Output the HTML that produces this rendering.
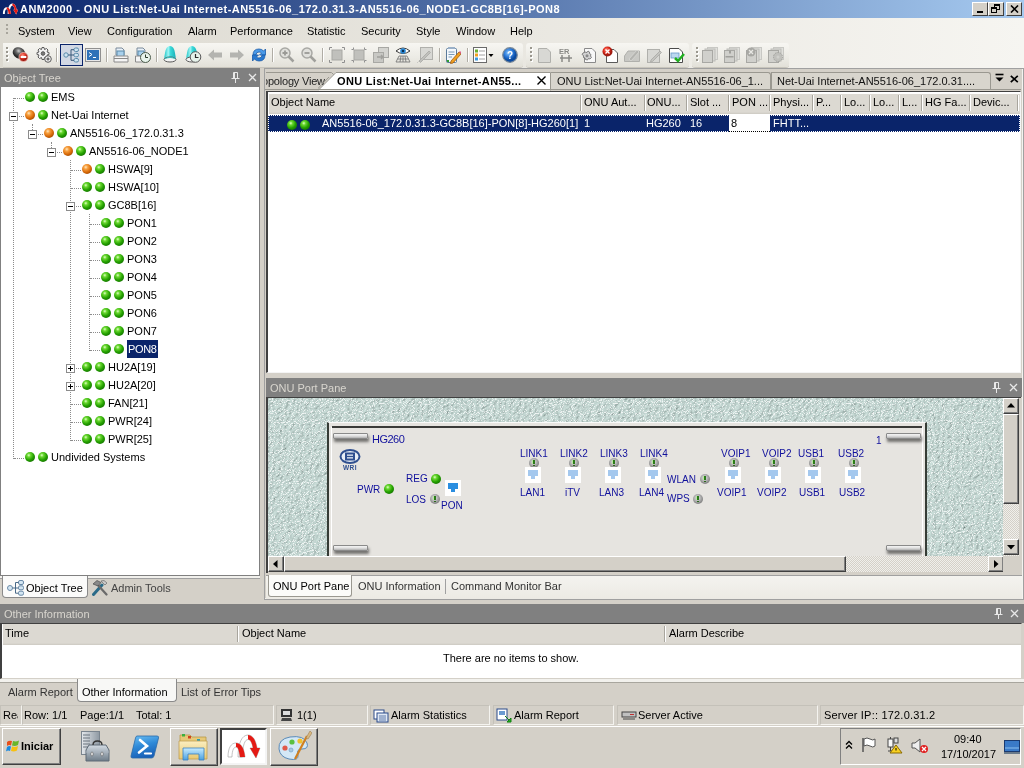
<!DOCTYPE html>
<html><head><meta charset="utf-8">
<style>
*{box-sizing:border-box;margin:0;padding:0}
html,body{width:1024px;height:768px;overflow:hidden;background:#d4d0c8;font-family:"Liberation Sans",sans-serif;font-size:11px;color:#000}
.a{position:absolute}
.t{position:absolute;white-space:nowrap;line-height:13px}
.hdr{position:absolute;background:#808080}
.hdr .t{color:#d8d5ce}
.g,.o,.gr{position:absolute;width:10px;height:10px;border-radius:50%}
.g{background:radial-gradient(circle at 38% 32%,#e0ffc8 0%,#6ad830 20%,#24a000 52%,#0e6000 92%)}
.o{background:radial-gradient(circle at 38% 32%,#ffe8c0 0%,#f7a040 22%,#d86a08 55%,#8a3c00 90%)}
.dv{position:absolute;width:1px;border-left:1px dotted #8c8c8c}
.dh{position:absolute;height:1px;border-top:1px dotted #8c8c8c}
.exp{position:absolute;width:9px;height:9px;border:1px solid #8c8c8c;background:#fff}
.exp:before{content:"";position:absolute;left:1px;top:3px;width:5px;height:1px;background:#000}
.exp.p:after{content:"";position:absolute;left:3px;top:1px;width:1px;height:5px;background:#000}
.pl{position:absolute;white-space:nowrap;line-height:12px;font-size:10px;color:#10109c}
.led{position:absolute;width:10px;height:10px;border-radius:50%;background:radial-gradient(circle at 45% 40%,#e8e8e8 0%,#a8a8a8 45%,#585858 100%)}
.led:before{content:"";position:absolute;left:4px;top:2px;width:2px;height:4px;background:#2a7a1a;box-shadow:-1px 0 0 #b8e8a0}
.led:after{content:"";position:absolute;left:4px;top:7px;width:2px;height:1px;background:#2a6a1a}
.port{position:absolute;width:16px;height:16px;background:#fff}
.port:before{content:"";position:absolute;left:3px;top:3px;width:10px;height:6px;background:#a4c8ee}
.port:after{content:"";position:absolute;left:6px;top:9px;width:4px;height:3px;background:#a4c8ee}
.sep{position:absolute;top:48px;width:1px;height:16px;background:#b8b5ad;border-right:1px solid #fff}
.colsep{position:absolute;top:95px;width:2px;height:17px;border-left:1px solid #a0a0a0;border-right:1px solid #fff}
</style></head><body><div style="position:absolute;left:0;top:0;width:1024px;height:768px;overflow:hidden;will-change:transform">

<!-- ============ TITLE BAR ============ -->
<div class="a" style="left:0;top:0;width:1024px;height:18px;background:linear-gradient(to right,#0a246a,#a6caf0)">
  <svg class="a" style="left:2px;top:2px" width="17" height="14" viewBox="0 0 36 27"><path d="M12 24 C12 10 16 2 22 2 C27 2 30 8 31 15 L34 15 L30 25 L24 15 L27 15 C26 9 24 6.5 22 6.5 C19 6.5 16.5 12 16.5 24Z" fill="#fff" /><path d="M22 2 C27 2 30 8 31 15 L34 15 L30 25 L24 15 L27 15 C26 9 24 6.5 22 6.5Z" fill="#e41a14"/><path d="M2 24 C2 15 5 10 10 10 C15 10 18 15 19 24 L14 24 C13 17 12 14 10 14 C8 14 6 17 6 24Z" fill="#fff" /><path d="M10 10 C15 10 18 15 19 24 L14 24 C13 17 12 14 10 14Z" fill="#e41a14"/></svg>
  <div class="t" style="left:20px;top:3px;color:#fff;font-weight:bold;letter-spacing:0.45px">ANM2000 - ONU List:Net-Uai Internet-AN5516-06_172.0.31.3-AN5516-06_NODE1-GC8B[16]-PON8</div>
  <div class="a" style="left:972px;top:2px;width:16px;height:14px;background:#d4d0c8;border:1px solid;border-color:#fff #404040 #404040 #fff"><div class="a" style="left:4px;top:8px;width:6px;height:2px;background:#000"></div></div>
  <div class="a" style="left:988px;top:2px;width:16px;height:14px;background:#d4d0c8;border:1px solid;border-color:#fff #404040 #404040 #fff"><div class="a" style="left:5px;top:1px;width:6px;height:6px;border:1px solid #000;border-top-width:2px"></div><div class="a" style="left:2px;top:4px;width:6px;height:6px;border:1px solid #000;border-top-width:2px;background:#d4d0c8"></div></div>
  <div class="a" style="left:1006px;top:2px;width:16px;height:14px;background:#d4d0c8;border:1px solid;border-color:#fff #404040 #404040 #fff"><svg class="a" style="left:3px;top:2px" width="9" height="8"><path d="M1 0.5 L8 7.5 M8 0.5 L1 7.5" stroke="#000" stroke-width="1.6"/></svg></div>
</div>

<!-- ============ MENU BAR ============ -->
<div class="a" style="left:0;top:18px;width:1024px;height:25px;background:linear-gradient(to right,#dcd9d0,#f6f5f1)">
  <div class="a" style="left:6px;top:6px;width:2px;height:12px;background:repeating-linear-gradient(to bottom,#a8a59c 0 2px,transparent 2px 4px)"></div>
  <div class="t" style="left:18px;top:7px">System</div>
  <div class="t" style="left:68px;top:7px">View</div>
  <div class="t" style="left:107px;top:7px">Configuration</div>
  <div class="t" style="left:188px;top:7px">Alarm</div>
  <div class="t" style="left:230px;top:7px">Performance</div>
  <div class="t" style="left:307px;top:7px">Statistic</div>
  <div class="t" style="left:361px;top:7px">Security</div>
  <div class="t" style="left:416px;top:7px">Style</div>
  <div class="t" style="left:456px;top:7px">Window</div>
  <div class="t" style="left:510px;top:7px">Help</div>
</div>

<!-- ============ TOOLBAR ROW ============ -->
<div class="a" style="left:0;top:43px;width:1024px;height:25px;background:linear-gradient(to right,#dcd9d0,#f6f5f1)"></div>
<div class="a" style="left:3px;top:43px;width:520px;height:24px;border-radius:0 3px 3px 0;background:linear-gradient(#f7f6f2,#ecebe5 60%,#e2e0d8);box-shadow:0 1px 0 #c8c5bc"></div>
<div class="a" style="left:526px;top:43px;width:163px;height:24px;border-radius:3px;background:linear-gradient(#f7f6f2,#ecebe5 60%,#e2e0d8);box-shadow:0 1px 0 #c8c5bc"></div>
<div class="a" style="left:692px;top:43px;width:97px;height:24px;border-radius:3px;background:linear-gradient(#f7f6f2,#ecebe5 60%,#e2e0d8);box-shadow:0 1px 0 #c8c5bc"></div>
<div class="a" style="left:6px;top:47px;width:2px;height:2px;background:#9a978e;box-shadow:1px 1px 0 #fff"></div><div class="a" style="left:6px;top:51px;width:2px;height:2px;background:#9a978e;box-shadow:1px 1px 0 #fff"></div><div class="a" style="left:6px;top:55px;width:2px;height:2px;background:#9a978e;box-shadow:1px 1px 0 #fff"></div><div class="a" style="left:6px;top:59px;width:2px;height:2px;background:#9a978e;box-shadow:1px 1px 0 #fff"></div>
<div class="a" style="left:530px;top:47px;width:2px;height:2px;background:#9a978e;box-shadow:1px 1px 0 #fff"></div><div class="a" style="left:530px;top:51px;width:2px;height:2px;background:#9a978e;box-shadow:1px 1px 0 #fff"></div><div class="a" style="left:530px;top:55px;width:2px;height:2px;background:#9a978e;box-shadow:1px 1px 0 #fff"></div><div class="a" style="left:530px;top:59px;width:2px;height:2px;background:#9a978e;box-shadow:1px 1px 0 #fff"></div>
<div class="a" style="left:696px;top:47px;width:2px;height:2px;background:#9a978e;box-shadow:1px 1px 0 #fff"></div><div class="a" style="left:696px;top:51px;width:2px;height:2px;background:#9a978e;box-shadow:1px 1px 0 #fff"></div><div class="a" style="left:696px;top:55px;width:2px;height:2px;background:#9a978e;box-shadow:1px 1px 0 #fff"></div><div class="a" style="left:696px;top:59px;width:2px;height:2px;background:#9a978e;box-shadow:1px 1px 0 #fff"></div>
<div class="a" style="left:56px;top:48px;width:1px;height:14px;background:#b0ada5;box-shadow:1px 0 0 #fff"></div>
<div class="a" style="left:106px;top:48px;width:1px;height:14px;background:#b0ada5;box-shadow:1px 0 0 #fff"></div>
<div class="a" style="left:156px;top:48px;width:1px;height:14px;background:#b0ada5;box-shadow:1px 0 0 #fff"></div>
<div class="a" style="left:272px;top:48px;width:1px;height:14px;background:#b0ada5;box-shadow:1px 0 0 #fff"></div>
<div class="a" style="left:322px;top:48px;width:1px;height:14px;background:#b0ada5;box-shadow:1px 0 0 #fff"></div>
<div class="a" style="left:439px;top:48px;width:1px;height:14px;background:#b0ada5;box-shadow:1px 0 0 #fff"></div>
<div class="a" style="left:467px;top:48px;width:1px;height:14px;background:#b0ada5;box-shadow:1px 0 0 #fff"></div>
<svg class="a" style="left:12px;top:46px" width="17" height="16" viewBox="0 0 17 16"><defs><radialGradient id="ds" cx="40%" cy="35%"><stop offset="0" stop-color="#d0d0d0"/><stop offset="0.45" stop-color="#6a6a6a"/><stop offset="1" stop-color="#2a2a2a"/></radialGradient><radialGradient id="rd" cx="40%" cy="35%"><stop offset="0" stop-color="#ff9a8a"/><stop offset="0.6" stop-color="#e03a2a"/><stop offset="1" stop-color="#a01a10"/></radialGradient></defs><ellipse cx="7" cy="7" rx="6.5" ry="5.5" transform="rotate(30 7 7)" fill="url(#ds)"/><circle cx="11.5" cy="11" r="4.5" fill="url(#rd)" stroke="#f4c0b8" stroke-width="0.8"/><rect x="8.7" y="10" width="5.6" height="2" fill="#fff"/></svg>
<svg class="a" style="left:36px;top:47px" width="16" height="16" viewBox="0 0 16 16"><g fill="#f2f2f2" stroke="#5a5a5a" stroke-width="1"><path d="M6 0.5 H8 L8.5 2.5 L10.5 1.5 L12 3 L11 5 L13 5.5 V7.5 L11 8 L12 10 L10.5 11.5 L8.5 10.5 L8 12.5 H6 L5.5 10.5 L3.5 11.5 L2 10 L3 8 L1 7.5 V5.5 L3 5 L2 3 L3.5 1.5 L5.5 2.5Z"/><circle cx="7" cy="6.5" r="1.8" fill="#7a7a7a"/><circle cx="12" cy="12" r="3.3"/><circle cx="12" cy="12" r="1.1" fill="#7a7a7a"/></g></svg>
<div class="a" style="left:60px;top:44px;width:23px;height:22px;background:#d2d8e4;border:1px solid #0a246a"></div>
<svg class="a" style="left:63px;top:47px" width="17" height="16" viewBox="0 0 17 16"><g fill="#cfe3f0" stroke="#5a8aaa" stroke-width="1"><circle cx="3" cy="8" r="2.2"/><rect x="11" y="1" width="4.5" height="3.5" rx="1.5"/><rect x="11" y="6.3" width="4.5" height="3.5" rx="1.5"/><rect x="11" y="11.5" width="4.5" height="3.5" rx="1.5"/></g><path d="M5.2 8 H8 M8 2.7 V13.3 M8 2.7 H11 M8 8 H11 M8 13.3 H11" stroke="#3a5a7a" fill="none"/></svg>
<svg class="a" style="left:85px;top:48px" width="16" height="14" viewBox="0 0 16 14"><rect x="0.5" y="0.5" width="15" height="13" fill="#e8e8e8" stroke="#909090"/><rect x="2" y="2" width="12" height="10" fill="#2f72b8"/><path d="M4 4.5 L7 6.5 L4 8.5" stroke="#fff" fill="none"/><path d="M8 9.5 H11" stroke="#fff"/></svg>
<svg class="a" style="left:113px;top:47px" width="16" height="16" viewBox="0 0 16 16"><path d="M3 1 H9 L11 3 V8 H3Z" fill="#e8f0f8" stroke="#7a8a9a"/><rect x="4" y="4" width="7" height="6" fill="#a8d0ec" stroke="#5a8aaa"/><path d="M1 9 H15 V15 H1Z" fill="#f4f4f4" stroke="#8a8a8a"/><path d="M1 11.5 H15" stroke="#8a8a8a"/></svg>
<svg class="a" style="left:135px;top:47px" width="16" height="16" viewBox="0 0 16 16"><path d="M2 1 H8 L10 3 V8 H2Z" fill="#e8f0f8" stroke="#7a8a9a"/><rect x="3" y="4" width="6" height="5" fill="#a8d0ec" stroke="#5a8aaa"/><path d="M0.5 9 H9 V15 H0.5Z" fill="#f4f4f4" stroke="#8a8a8a"/><circle cx="10.5" cy="10.5" r="5" fill="#e8f4ec" stroke="#4a5a4a"/><path d="M10.5 7.5 V10.5 H13" stroke="#2a3a2a" fill="none"/></svg>
<svg class="a" style="left:163px;top:45px" width="14" height="18" viewBox="0 0 14 18"><defs><linearGradient id="tl" x1="0" x2="1"><stop offset="0" stop-color="#22c8c8"/><stop offset="0.35" stop-color="#9ff4f4"/><stop offset="0.55" stop-color="#3ad8d8"/><stop offset="1" stop-color="#18b0b8"/></linearGradient></defs><path d="M1.5 15 Q1 12 2 8 Q3 1 7 1 Q11 1 12 8 Q13 12 12.5 15 Z" fill="url(#tl)"/><ellipse cx="7" cy="14.5" rx="6" ry="2.5" fill="#f4f4f4" stroke="#5a5a5a" stroke-width="1"/><path d="M2 13.5 Q7 11.5 12 13.5" stroke="#30c0c0" fill="none" stroke-width="1.2"/></svg>
<svg class="a" style="left:185px;top:45px" width="17" height="18" viewBox="0 0 17 18"><path d="M1.5 15 Q1 12 2 8 Q3 1 7 1 Q11 1 12 8 Q13 12 12.5 15 Z" fill="url(#tl)"/><ellipse cx="7" cy="14.5" rx="6" ry="2.5" fill="#f4f4f4" stroke="#5a5a5a" stroke-width="1"/><circle cx="10.5" cy="12" r="5.3" fill="#e6f2ea" stroke="#5a5a5a" stroke-width="1"/><path d="M10.5 9 V12.5 H13.5" stroke="#2a2a2a" fill="none" stroke-width="1.2"/></svg>
<svg class="a" style="left:208px;top:49px" width="15" height="12" viewBox="0 0 15 12"><path d="M0 6 L6 0.5 V3.5 H14 V8.5 H6 V11.5Z" fill="#b4b4b0"/></svg>
<svg class="a" style="left:229px;top:49px" width="15" height="12" viewBox="0 0 15 12"><path d="M15 6 L9 0.5 V3.5 H1 V8.5 H9 V11.5Z" fill="#b4b4b0"/></svg>
<svg class="a" style="left:251px;top:47px" width="16" height="16" viewBox="0 0 16 16"><path d="M2 8 Q2 2 8 2 Q11 2 12.5 4 L14.5 2 V8 H8.5 L10.5 6 Q9.5 5 8 5 Q5 5 5 8Z" fill="#4a9ae8" stroke="#1a5aa8" stroke-width="0.8"/><path d="M14 8 Q14 14 8 14 Q5 14 3.5 12 L1.5 14 V8 H7.5 L5.5 10 Q6.5 11 8 11 Q11 11 11 8Z" fill="#2a7ad0" stroke="#1a5aa8" stroke-width="0.8"/></svg>
<svg class="a" style="left:279px;top:47px" width="16" height="16" viewBox="0 0 16 16"><circle cx="6" cy="6" r="5" fill="#e0e0dc" stroke="#a8a8a4" stroke-width="1.5"/><path d="M9.5 9.5 L14.5 14.5" stroke="#a0a09c" stroke-width="2.5"/><path d="M3.5 6 H8.5 M6 3.5 V8.5" stroke="#9a9a96" stroke-width="1.8"/></svg>
<svg class="a" style="left:301px;top:47px" width="16" height="16" viewBox="0 0 16 16"><circle cx="6" cy="6" r="5" fill="#e0e0dc" stroke="#a8a8a4" stroke-width="1.5"/><path d="M9.5 9.5 L14.5 14.5" stroke="#a0a09c" stroke-width="2.5"/><path d="M3.5 6 H8.5" stroke="#9a9a96" stroke-width="1.8"/></svg>
<svg class="a" style="left:329px;top:47px" width="16" height="16" viewBox="0 0 16 16"><rect x="3" y="3" width="10" height="10" fill="#c0c0bc" stroke="#a8a8a4"/><path d="M0.5 3 V0.5 H3 M13 0.5 H15.5 V3 M15.5 13 V15.5 H13 M3 15.5 H0.5 V13" stroke="#909090" fill="none"/></svg>
<svg class="a" style="left:351px;top:47px" width="16" height="16" viewBox="0 0 16 16"><rect x="3" y="3" width="10" height="10" fill="#c0c0bc" stroke="#a8a8a4"/><path d="M0.5 2.5 H2.5 V0.5 M13.5 0.5 V2.5 H15.5 M15.5 13.5 H13.5 V15.5 M2.5 15.5 V13.5 H0.5" stroke="#909090" fill="none"/></svg>
<svg class="a" style="left:373px;top:47px" width="16" height="16" viewBox="0 0 16 16"><rect x="5.5" y="0.5" width="10" height="10" fill="#d4d4d0" stroke="#a8a8a4"/><rect x="0.5" y="5.5" width="10" height="10" fill="#c8c8c4" stroke="#a8a8a4"/><path d="M4 10 H10 L8 8 M10 10 L8 12" stroke="#a0a09c" stroke-width="1.5" fill="none"/></svg>
<svg class="a" style="left:395px;top:46px" width="16" height="17" viewBox="0 0 16 17"><path d="M1 5 Q8 -1 15 5 Q8 10 1 5Z" fill="#fff" stroke="#3a3a3a"/><circle cx="8" cy="5" r="2.8" fill="#2a8ad8"/><circle cx="8" cy="5" r="1.2" fill="#0a2a4a"/><path d="M4 10 H12 L15 16 H1Z M2.5 13 H13.5 M6 10 L5 16 M10 10 L11 16 M8 10 V16" stroke="#7a7a7a" fill="none" stroke-width="0.9"/></svg>
<svg class="a" style="left:417px;top:47px" width="16" height="16" viewBox="0 0 16 16"><rect x="3.5" y="0.5" width="12" height="12" fill="#d8d8d4" stroke="#b0b0ac"/><path d="M2 14 L12 4 L13.5 5.5 L3.5 15.5Z" fill="#c0c0bc" stroke="#a8a8a4" stroke-width="0.8"/><path d="M0.5 15.5 L2 14" stroke="#a8a8a4" stroke-width="1" stroke-dasharray="1 1"/></svg>
<svg class="a" style="left:445px;top:47px" width="16" height="17" viewBox="0 0 16 17"><rect x="1.5" y="1.5" width="10" height="14" rx="1" fill="#f4f8fc" stroke="#5a7a9a"/><path d="M3.5 5 H9.5 M3.5 7.5 H9.5 M3.5 10 H7" stroke="#7a9ab8"/><rect x="3" y="0" width="7" height="2" fill="#9ab0c8"/><path d="M6 14 L14 5 L16 7 L8 16 L5.5 16.5Z" fill="#f0a020" stroke="#a05a10" stroke-width="0.8"/><path d="M14 5 L16 7 L17 6 L15 4Z" fill="#e05a8a"/><rect x="2" y="13" width="2" height="2" fill="#30a030"/></svg>
<svg class="a" style="left:473px;top:47px" width="21" height="16" viewBox="0 0 21 16"><rect x="0.5" y="0.5" width="13" height="15" fill="#fff" stroke="#6a6a6a"/><rect x="2" y="2.5" width="3" height="3" fill="#6ab030"/><rect x="2" y="6.5" width="3" height="3" fill="#f0a020"/><rect x="2" y="10.5" width="3" height="3" fill="#3a9ae0"/><path d="M6 4 H12 M6 8 H12 M6 12 H12" stroke="#8a8a8a" stroke-width="0.8"/><path d="M15.5 7 H20.5 L18 10Z" fill="#000"/></svg>
<svg class="a" style="left:502px;top:47px" width="16" height="16" viewBox="0 0 16 16"><defs><radialGradient id="hb" cx="40%" cy="35%"><stop offset="0" stop-color="#8ac8ff"/><stop offset="0.6" stop-color="#2a78d8"/><stop offset="1" stop-color="#0a4aa0"/></radialGradient></defs><circle cx="8" cy="8" r="7.3" fill="url(#hb)" stroke="#7a8a9a" stroke-width="1.2"/><text x="8" y="12" font-size="10" font-weight="bold" fill="#fff" text-anchor="middle" font-family="Liberation Sans">?</text></svg>
<svg class="a" style="left:537px;top:47px" width="15" height="16" viewBox="0 0 15 16"><path d="M1.5 1.5 H10 L13.5 5 V15.5 H1.5Z" fill="#d8d8d4" stroke="#b0b0ac"/></svg>
<svg class="a" style="left:559px;top:47px" width="16" height="16" viewBox="0 0 16 16"><text x="0" y="7" font-size="7.5" font-weight="bold" fill="#8a8a86" font-family="Liberation Sans">ER</text><path d="M3 8 V15 M10 8 V15 M1 11 H13" stroke="#8a8a86" stroke-width="1.5"/></svg>
<svg class="a" style="left:580px;top:47px" width="17" height="16" viewBox="0 0 17 16"><path d="M4.5 1.5 H12 L15.5 5 V15.5 H4.5Z" fill="#f8f8f8" stroke="#8a8a8a"/><path d="M5 5 L7 5.5 L8 4 L9.5 5 L9.5 6.5 L11 7.5 L10.5 9 L11.5 10.5 L10 12 L8.5 11.5 L7.5 13 L5.5 12.5 L5 11 L3.5 10.5 L3.5 8.5 L2 7.5 L3 6 Z" fill="#d0d0d0" stroke="#6a6a6a" stroke-width="0.8"/><circle cx="7" cy="8.7" r="1.5" fill="#8a8a8a"/></svg>
<svg class="a" style="left:602px;top:46px" width="17" height="17" viewBox="0 0 17 17"><path d="M4.5 3.5 H12 L15.5 7 V16.5 H4.5Z" fill="#fff" stroke="#5a5a5a"/><defs><radialGradient id="rx" cx="40%" cy="35%"><stop offset="0" stop-color="#ff9a8a"/><stop offset="0.6" stop-color="#e02a1a"/><stop offset="1" stop-color="#a01a10"/></radialGradient></defs><circle cx="5.5" cy="5.5" r="5" fill="url(#rx)"/><path d="M3.5 3.5 L7.5 7.5 M7.5 3.5 L3.5 7.5" stroke="#fff" stroke-width="1.3"/></svg>
<svg class="a" style="left:624px;top:48px" width="16" height="14" viewBox="0 0 16 14"><path d="M0.5 8 L4 3 H15.5 V13.5 H0.5Z" fill="#c8c8c4" stroke="#b0b0ac"/><path d="M5 11 L13 2 L15 4 L7 13Z" fill="#b4b4b0" stroke="#d8d8d4" stroke-width="0.8"/></svg>
<svg class="a" style="left:646px;top:47px" width="16" height="16" viewBox="0 0 16 16"><rect x="1.5" y="2.5" width="12" height="13" fill="#d8d8d4" stroke="#b0b0ac"/><path d="M5 13 L14 4 L15.5 5.5 L6.5 14.5 L4.5 15Z" fill="#c4c4c0" stroke="#a8a8a4" stroke-width="0.8"/></svg>
<svg class="a" style="left:668px;top:47px" width="17" height="17" viewBox="0 0 17 17"><path d="M1.5 1.5 H11 L14.5 5 V15.5 H1.5Z" fill="#fff" stroke="#4a4a4a"/><rect x="3" y="6" width="8" height="5" fill="#bcd8f0" stroke="#6a9ac8" stroke-width="0.8"/><path d="M7 11 L10 14 L16 7" stroke="#20b020" stroke-width="2.5" fill="none"/></svg>
<svg class="a" style="left:702px;top:47px" width="16" height="16" viewBox="0 0 16 16"><rect x="5.5" y="0.5" width="10" height="12" fill="#e0e0dc" stroke="#c8c8c4"/><rect x="3" y="2" width="10" height="12" fill="#d8d8d4" stroke="#bcbcb8"/><rect x="0.5" y="3.5" width="10" height="12" fill="#d0d0cc" stroke="#a8a8a4"/></svg>
<svg class="a" style="left:724px;top:47px" width="16" height="16" viewBox="0 0 16 16"><rect x="5.5" y="0.5" width="10" height="12" fill="#e0e0dc" stroke="#c8c8c4"/><rect x="3" y="2" width="10" height="12" fill="#d8d8d4" stroke="#bcbcb8"/><rect x="0.5" y="3.5" width="10" height="12" fill="#d0d0cc" stroke="#a8a8a4"/><rect x="1.5" y="9" width="8" height="1.5" fill="#a0a09c"/><rect x="5" y="3.5" width="2" height="3" fill="#a0a09c"/></svg>
<svg class="a" style="left:746px;top:47px" width="16" height="16" viewBox="0 0 16 16"><rect x="5.5" y="0.5" width="10" height="12" fill="#e0e0dc" stroke="#c8c8c4"/><rect x="3" y="2" width="10" height="12" fill="#d8d8d4" stroke="#bcbcb8"/><rect x="0.5" y="3.5" width="10" height="12" fill="#d0d0cc" stroke="#a8a8a4"/><circle cx="5" cy="5" r="4.5" fill="#a8a8a4"/><path d="M3 3 L7 7 M7 3 L3 7" stroke="#e8e8e4" stroke-width="1.3"/></svg>
<svg class="a" style="left:768px;top:47px" width="16" height="16" viewBox="0 0 16 16"><rect x="5.5" y="0.5" width="10" height="12" fill="#e0e0dc" stroke="#c8c8c4"/><rect x="3" y="2" width="10" height="12" fill="#d8d8d4" stroke="#bcbcb8"/><rect x="0.5" y="3.5" width="10" height="12" fill="#d0d0cc" stroke="#a8a8a4"/><circle cx="10" cy="10" r="4.5" fill="#c0c0bc" stroke="#a0a09c" stroke-dasharray="1.5 1"/><circle cx="10" cy="10" r="1.5" fill="#d0d0cc"/></svg>

<!-- ============ LEFT PANEL ============ -->
<div class="hdr" style="left:0;top:68px;width:260px;height:19px">
  <div class="t" style="left:4px;top:4px">Object Tree</div>
  <svg class="a" style="left:231px;top:4px" width="9" height="11"><path d="M2.5 0.5 H6.5 V6 M2.5 0.5 V6 M0.5 6.5 H8.5 M4.5 7 V11" stroke="#e8e8e8" stroke-width="1" fill="none"/><path d="M3.5 1 V6" stroke="#e8e8e8"/></svg>
  <svg class="a" style="left:248px;top:5px" width="9" height="9"><path d="M1 1 L8 8 M8 1 L1 8" stroke="#e8e8e8" stroke-width="1.3"/></svg>
</div>
<div class="a" style="left:0;top:87px;width:260px;height:489px;background:#fff;border:1px solid #808080;border-top:0"></div>
<div class="dv" style="left:89px;top:214px;height:137px"></div>
<div class="dv" style="left:70px;top:160px;height:281px"></div>
<div class="dv" style="left:51px;top:142px;height:6px"></div>
<div class="dv" style="left:32px;top:124px;height:6px"></div>
<div class="dv" style="left:13px;top:98px;height:361px"></div>
<div class="dh" style="left:14px;top:98px;width:10px"></div>
<div class="g" style="left:25px;top:92px"></div>
<div class="g" style="left:38px;top:92px"></div>
<div class="t" style="left:51px;top:91px">EMS</div>
<div class="dh" style="left:14px;top:116px;width:10px"></div>
<div class="exp" style="left:9px;top:112px"></div>
<div class="o" style="left:25px;top:110px"></div>
<div class="g" style="left:38px;top:110px"></div>
<div class="t" style="left:51px;top:109px">Net-Uai Internet</div>
<div class="dh" style="left:33px;top:134px;width:10px"></div>
<div class="exp" style="left:28px;top:130px"></div>
<div class="o" style="left:44px;top:128px"></div>
<div class="g" style="left:57px;top:128px"></div>
<div class="t" style="left:70px;top:127px">AN5516-06_172.0.31.3</div>
<div class="dh" style="left:52px;top:152px;width:10px"></div>
<div class="exp" style="left:47px;top:148px"></div>
<div class="o" style="left:63px;top:146px"></div>
<div class="g" style="left:76px;top:146px"></div>
<div class="t" style="left:89px;top:145px">AN5516-06_NODE1</div>
<div class="dh" style="left:71px;top:170px;width:10px"></div>
<div class="o" style="left:82px;top:164px"></div>
<div class="g" style="left:95px;top:164px"></div>
<div class="t" style="left:108px;top:163px">HSWA[9]</div>
<div class="dh" style="left:71px;top:188px;width:10px"></div>
<div class="g" style="left:82px;top:182px"></div>
<div class="g" style="left:95px;top:182px"></div>
<div class="t" style="left:108px;top:181px">HSWA[10]</div>
<div class="dh" style="left:71px;top:206px;width:10px"></div>
<div class="exp" style="left:66px;top:202px"></div>
<div class="g" style="left:82px;top:200px"></div>
<div class="g" style="left:95px;top:200px"></div>
<div class="t" style="left:108px;top:199px">GC8B[16]</div>
<div class="dh" style="left:90px;top:224px;width:10px"></div>
<div class="g" style="left:101px;top:218px"></div>
<div class="g" style="left:114px;top:218px"></div>
<div class="t" style="left:127px;top:217px">PON1</div>
<div class="dh" style="left:90px;top:242px;width:10px"></div>
<div class="g" style="left:101px;top:236px"></div>
<div class="g" style="left:114px;top:236px"></div>
<div class="t" style="left:127px;top:235px">PON2</div>
<div class="dh" style="left:90px;top:260px;width:10px"></div>
<div class="g" style="left:101px;top:254px"></div>
<div class="g" style="left:114px;top:254px"></div>
<div class="t" style="left:127px;top:253px">PON3</div>
<div class="dh" style="left:90px;top:278px;width:10px"></div>
<div class="g" style="left:101px;top:272px"></div>
<div class="g" style="left:114px;top:272px"></div>
<div class="t" style="left:127px;top:271px">PON4</div>
<div class="dh" style="left:90px;top:296px;width:10px"></div>
<div class="g" style="left:101px;top:290px"></div>
<div class="g" style="left:114px;top:290px"></div>
<div class="t" style="left:127px;top:289px">PON5</div>
<div class="dh" style="left:90px;top:314px;width:10px"></div>
<div class="g" style="left:101px;top:308px"></div>
<div class="g" style="left:114px;top:308px"></div>
<div class="t" style="left:127px;top:307px">PON6</div>
<div class="dh" style="left:90px;top:332px;width:10px"></div>
<div class="g" style="left:101px;top:326px"></div>
<div class="g" style="left:114px;top:326px"></div>
<div class="t" style="left:127px;top:325px">PON7</div>
<div class="dh" style="left:90px;top:350px;width:10px"></div>
<div class="g" style="left:101px;top:344px"></div>
<div class="g" style="left:114px;top:344px"></div>
<div class="t" style="left:127px;top:340px;height:18px;line-height:18px;padding:0 1px;letter-spacing:-0.35px;background:#0a246a;color:#fff">PON8</div>
<div class="dh" style="left:71px;top:368px;width:10px"></div>
<div class="exp p" style="left:66px;top:364px"></div>
<div class="g" style="left:82px;top:362px"></div>
<div class="g" style="left:95px;top:362px"></div>
<div class="t" style="left:108px;top:361px">HU2A[19]</div>
<div class="dh" style="left:71px;top:386px;width:10px"></div>
<div class="exp p" style="left:66px;top:382px"></div>
<div class="g" style="left:82px;top:380px"></div>
<div class="g" style="left:95px;top:380px"></div>
<div class="t" style="left:108px;top:379px">HU2A[20]</div>
<div class="dh" style="left:71px;top:404px;width:10px"></div>
<div class="g" style="left:82px;top:398px"></div>
<div class="g" style="left:95px;top:398px"></div>
<div class="t" style="left:108px;top:397px">FAN[21]</div>
<div class="dh" style="left:71px;top:422px;width:10px"></div>
<div class="g" style="left:82px;top:416px"></div>
<div class="g" style="left:95px;top:416px"></div>
<div class="t" style="left:108px;top:415px">PWR[24]</div>
<div class="dh" style="left:71px;top:440px;width:10px"></div>
<div class="g" style="left:82px;top:434px"></div>
<div class="g" style="left:95px;top:434px"></div>
<div class="t" style="left:108px;top:433px">PWR[25]</div>
<div class="dh" style="left:14px;top:458px;width:10px"></div>
<div class="g" style="left:25px;top:452px"></div>
<div class="g" style="left:38px;top:452px"></div>
<div class="t" style="left:51px;top:451px">Undivided Systems</div>
<!-- left tabs -->
<div class="a" style="left:0;top:576px;width:260px;height:28px;background:#d4d0c8"></div>
<div class="a" style="left:0;top:576px;width:260px;height:2px;background:#f2f1ed"></div><div class="a" style="left:0;top:578px;width:260px;height:1px;background:#a0a0a0"></div>
<div class="a" style="left:2px;top:576px;width:86px;height:22px;background:#fbfbfa;border:1px solid #8a8a8a;border-top:0;border-radius:0 0 4px 4px"></div>
<svg class="a" style="left:7px;top:580px" width="17" height="16"><g fill="#d4e6f2" stroke="#6a8aa8"><circle cx="3" cy="8" r="2.5"/><rect x="11.5" y="0.5" width="5" height="4" rx="1.5"/><rect x="11.5" y="5.8" width="5" height="4" rx="1.5"/><rect x="11.5" y="11.2" width="5" height="4" rx="1.5"/></g><path d="M5.5 8 H8.5 M8.5 2.5 V13.2 M8.5 2.5 H11.5 M8.5 8 H11.5 M8.5 13.2 H11.5" stroke="#4a6a88" fill="none"/></svg>
<div class="t" style="left:26px;top:582px">Object Tree</div>
<svg class="a" style="left:92px;top:580px" width="16" height="16"><path d="M1.5 14.5 L10 5" stroke="#2a6a88" stroke-width="3" stroke-linecap="round"/><path d="M14.5 14.5 L5 4" stroke="#6a6a6a" stroke-width="2.2" stroke-linecap="round"/><path d="M1 4 L5 0.5 L9 2.5 L6 6Z" fill="#8a8a8a" stroke="#4a4a4a" stroke-width="0.7"/><path d="M9 1 L12 0.5 L15 3 L13 5Z" fill="#cacaca" stroke="#6a6a6a" stroke-width="0.7"/></svg>
<div class="t" style="left:111px;top:582px;color:#444">Admin Tools</div>

<!-- ============ RIGHT DOCUMENT AREA ============ -->
<div class="a" style="left:264px;top:68px;width:760px;height:532px;border:1px solid #a0a0a0;border-right-color:#a0a0a0;border-bottom-color:#a0a0a0"></div><div class="a" style="left:265px;top:69px;width:758px;height:530px;border:1px solid #f4f3ef;border-top:0;border-left:0"></div>
<div class="a" style="left:265px;top:69px;width:756px;height:21px;background:#d4d0c8"></div>
<svg class="a" style="left:266px;top:72px" width="72" height="18"><path d="M0 0.5 H65.5 L71 6" stroke="#9a9890" fill="none"/></svg>
<div class="a" style="left:266px;top:73px;width:62px;height:16px;overflow:hidden"><div class="t" style="left:-4px;top:2px;color:#222;letter-spacing:-0.2px">opology View</div></div>
<svg class="a" style="left:318px;top:72px" width="234" height="19"><path d="M0 18.5 L18 0.5 H232.5 V18.5" fill="#fff" stroke="#9a9890"/><path d="M-2 18.5 L11 5" stroke="#9a9890"/></svg>
<div class="t" style="left:337px;top:75px;font-weight:bold;letter-spacing:0.33px">ONU List:Net-Uai Internet-AN55...</div>
<svg class="a" style="left:537px;top:76px" width="9" height="9"><path d="M0.5 0.5 L8.5 8.5 M8.5 0.5 L0.5 8.5" stroke="#000" stroke-width="1.4"/></svg>
<div class="a" style="left:551px;top:72px;width:220px;height:18px;border:1px solid #9a9890;border-bottom:0;border-left:0;border-radius:0 3px 0 0;background:#d8d5cd"></div>
<div class="t" style="left:557px;top:75px;color:#111">ONU List:Net-Uai Internet-AN5516-06_1...</div>
<div class="a" style="left:771px;top:72px;width:220px;height:18px;border:1px solid #9a9890;border-bottom:0;border-radius:0 3px 0 0;background:#d8d5cd"></div>
<div class="t" style="left:777px;top:75px;color:#111">Net-Uai Internet-AN5516-06_172.0.31....</div>
<svg class="a" style="left:995px;top:73px" width="10" height="10"><path d="M0.5 1.5 H8.5" stroke="#000" stroke-width="1.6"/><path d="M0.5 4.5 H8.5 L4.5 8.5Z" fill="#000"/></svg>
<svg class="a" style="left:1010px;top:75px" width="9" height="8"><path d="M0.8 0.8 L7.8 7.2 M7.8 0.8 L0.8 7.2" stroke="#000" stroke-width="1.7"/></svg>
<div class="a" style="left:265px;top:89px;width:756px;height:1px;background:#9a9890"></div>
<div class="a" style="left:266px;top:91px;width:755px;height:282px;background:#fff;border:1px solid #404040;border-left-width:2px;border-right-color:#f4f4f4;border-bottom-color:#f4f4f4"></div>
<div class="a" style="left:268px;top:93px;width:752px;height:21px;background:linear-gradient(#dcd9d2 0,#dcd9d2 18px,#c4c1b9 21px);border-left:1px solid #fff;border-top:1px solid #fff"></div>
<div class="t" style="left:271px;top:96px">Object Name</div>
<div class="t" style="left:584px;top:96px">ONU Aut...</div>
<div class="t" style="left:647px;top:96px">ONU...</div>
<div class="t" style="left:690px;top:96px">Slot ...</div>
<div class="t" style="left:732px;top:96px">PON ...</div>
<div class="t" style="left:773px;top:96px">Physi...</div>
<div class="t" style="left:816px;top:96px">P...</div>
<div class="t" style="left:844px;top:96px">Lo...</div>
<div class="t" style="left:873px;top:96px">Lo...</div>
<div class="t" style="left:902px;top:96px">L...</div>
<div class="t" style="left:925px;top:96px">HG Fa...</div>
<div class="t" style="left:973px;top:96px">Devic...</div>
<div class="a" style="left:580px;top:95px;width:1px;height:16px;background:#a8a59d"></div><div class="a" style="left:581px;top:95px;width:1px;height:16px;background:#fff"></div>
<div class="a" style="left:644px;top:95px;width:1px;height:16px;background:#a8a59d"></div><div class="a" style="left:645px;top:95px;width:1px;height:16px;background:#fff"></div>
<div class="a" style="left:686px;top:95px;width:1px;height:16px;background:#a8a59d"></div><div class="a" style="left:687px;top:95px;width:1px;height:16px;background:#fff"></div>
<div class="a" style="left:728px;top:95px;width:1px;height:16px;background:#a8a59d"></div><div class="a" style="left:729px;top:95px;width:1px;height:16px;background:#fff"></div>
<div class="a" style="left:769px;top:95px;width:1px;height:16px;background:#a8a59d"></div><div class="a" style="left:770px;top:95px;width:1px;height:16px;background:#fff"></div>
<div class="a" style="left:812px;top:95px;width:1px;height:16px;background:#a8a59d"></div><div class="a" style="left:813px;top:95px;width:1px;height:16px;background:#fff"></div>
<div class="a" style="left:840px;top:95px;width:1px;height:16px;background:#a8a59d"></div><div class="a" style="left:841px;top:95px;width:1px;height:16px;background:#fff"></div>
<div class="a" style="left:869px;top:95px;width:1px;height:16px;background:#a8a59d"></div><div class="a" style="left:870px;top:95px;width:1px;height:16px;background:#fff"></div>
<div class="a" style="left:898px;top:95px;width:1px;height:16px;background:#a8a59d"></div><div class="a" style="left:899px;top:95px;width:1px;height:16px;background:#fff"></div>
<div class="a" style="left:921px;top:95px;width:1px;height:16px;background:#a8a59d"></div><div class="a" style="left:922px;top:95px;width:1px;height:16px;background:#fff"></div>
<div class="a" style="left:969px;top:95px;width:1px;height:16px;background:#a8a59d"></div><div class="a" style="left:970px;top:95px;width:1px;height:16px;background:#fff"></div>
<div class="a" style="left:1017px;top:95px;width:1px;height:16px;background:#a8a59d"></div><div class="a" style="left:1018px;top:95px;width:1px;height:16px;background:#fff"></div>
<div class="a" style="left:268px;top:115px;width:752px;height:17px;background:#0a246a;outline:1px dotted #fff;outline-offset:-1px"></div>
<div class="g" style="left:287px;top:120px"></div><div class="g" style="left:300px;top:120px"></div>
<div class="t" style="left:322px;top:117px;color:#fff">AN5516-06_172.0.31.3-GC8B[16]-PON[8]-HG260[1]</div>
<div class="t" style="left:584px;top:117px;color:#fff">1</div>
<div class="t" style="left:646px;top:117px;color:#fff">HG260</div>
<div class="t" style="left:690px;top:117px;color:#fff">16</div>
<div class="a" style="left:729px;top:115px;width:41px;height:17px;background:#fff;border-bottom:1px dotted #000"></div>
<div class="t" style="left:731px;top:117px">8</div>
<div class="t" style="left:773px;top:117px;color:#fff">FHTT...</div>

<!-- ============ ONU PORT PANE ============ -->
<div class="hdr" style="left:266px;top:378px;width:756px;height:19px">
  <div class="t" style="left:4px;top:4px">ONU Port Pane</div>
  <svg class="a" style="left:726px;top:4px" width="9" height="11"><path d="M2.5 0.5 H6.5 V6 M2.5 0.5 V6 M0.5 6.5 H8.5 M4.5 7 V11" stroke="#e8e8e8" stroke-width="1" fill="none"/><path d="M3.5 1 V6" stroke="#e8e8e8"/></svg>
  <svg class="a" style="left:743px;top:5px" width="9" height="9"><path d="M1 1 L8 8 M8 1 L1 8" stroke="#e8e8e8" stroke-width="1.3"/></svg>
</div>
<div class="a" style="left:266px;top:397px;width:755px;height:176px;background:#d4d0c8;border-left:2px solid #404040;border-top:1px solid #404040"></div>
<svg class="a" style="left:268px;top:398px" width="735" height="158"><defs><filter id="tx" x="0" y="0" width="100%" height="100%"><feTurbulence type="fractalNoise" baseFrequency="0.28 0.75" numOctaves="3" seed="11" result="n"/><feDiffuseLighting in="n" lighting-color="#f8fffd" surfaceScale="2.6" result="l"><feDistantLight azimuth="235" elevation="58"/></feDiffuseLighting></filter><filter id="dt" x="0" y="0" width="100%" height="100%"><feTurbulence type="fractalNoise" baseFrequency="1.1" numOctaves="1" seed="5"/><feColorMatrix type="matrix" values="0 0 0 0 1  0 0 0 0 1  0 0 0 0 1  8 0 0 0 -4.3"/></filter></defs><rect width="735" height="158" fill="#8cb2aa"/><g transform="rotate(-30 367 79)" opacity="0.6"><rect x="-200" y="-350" width="1135" height="858" filter="url(#tx)"/></g><rect width="735" height="158" filter="url(#dt)" opacity="0.75"/></svg>
<div class="a" style="left:327px;top:422px;width:600px;height:134px;background:#e6e4e0;border-left:2px solid #363c36;border-right:2px solid #363c36;border-top:1px solid #fafafa"></div>
<div class="a" style="left:332px;top:426px;width:590px;height:2px;background:#3a3a38"></div>
<div class="a" style="left:331px;top:427px;width:1px;height:129px;background:#fff"></div>
<div class="a" style="left:922px;top:427px;width:1px;height:129px;background:#fff"></div>
<div class="a" style="left:333px;top:433px;width:35px;height:6px;border-radius:1px;background:linear-gradient(#f4f4f4,#e0e0e0 50%,#b0b0b0);border:1px solid #8a8a8a;box-shadow:1px 3px 3px rgba(0,0,0,0.5)"></div>
<div class="a" style="left:333px;top:545px;width:35px;height:6px;border-radius:1px;background:linear-gradient(#f4f4f4,#e0e0e0 50%,#b0b0b0);border:1px solid #8a8a8a;box-shadow:1px 3px 3px rgba(0,0,0,0.5)"></div>
<div class="a" style="left:886px;top:433px;width:35px;height:6px;border-radius:1px;background:linear-gradient(#f4f4f4,#e0e0e0 50%,#b0b0b0);border:1px solid #8a8a8a;box-shadow:1px 3px 3px rgba(0,0,0,0.5)"></div>
<div class="a" style="left:886px;top:545px;width:35px;height:6px;border-radius:1px;background:linear-gradient(#f4f4f4,#e0e0e0 50%,#b0b0b0);border:1px solid #8a8a8a;box-shadow:1px 3px 3px rgba(0,0,0,0.5)"></div>
<div class="pl" style="left:372px;top:433px;font-size:11px;letter-spacing:-0.5px">HG260</div>
<div class="pl" style="left:876px;top:435px">1</div>
<svg class="a" style="left:339px;top:449px" width="22" height="22"><ellipse cx="11" cy="7.5" rx="9.5" ry="6.5" fill="#e8eef6" stroke="#2f4f8f" stroke-width="2"/><rect x="6" y="3.5" width="10" height="8" fill="#2f4f8f"/><rect x="8" y="5.5" width="6" height="1.3" fill="#e8eef6"/><rect x="8" y="8.2" width="6" height="1.3" fill="#e8eef6"/><text x="11" y="21" font-size="6.5" font-weight="bold" fill="#2f4f8f" text-anchor="middle" font-family="Liberation Sans" letter-spacing="0.5">WRI</text></svg>
<div class="pl" style="left:357px;top:484px">PWR</div>
<div class="g" style="left:384px;top:484px"></div>
<div class="pl" style="left:406px;top:473px">REG</div>
<div class="g" style="left:431px;top:474px"></div>
<div class="pl" style="left:406px;top:494px">LOS</div>
<div class="led" style="left:430px;top:494px"></div>
<div class="port pon" style="left:445px;top:480px"></div>
<style>.port.pon:before{background:#2a8ee0;left:3px;top:3px;width:10px;height:6px}.port.pon:after{background:#2a8ee0}</style>
<div class="pl" style="left:441px;top:500px">PON</div>
<div class="pl" style="left:520px;top:448px">LINK1</div>
<div class="led" style="left:529px;top:458px"></div>
<div class="port" style="left:525px;top:467px"></div>
<div class="pl" style="left:520px;top:487px">LAN1</div>
<div class="pl" style="left:560px;top:448px">LINK2</div>
<div class="led" style="left:569px;top:458px"></div>
<div class="port" style="left:565px;top:467px"></div>
<div class="pl" style="left:565px;top:487px">iTV</div>
<div class="pl" style="left:600px;top:448px">LINK3</div>
<div class="led" style="left:609px;top:458px"></div>
<div class="port" style="left:605px;top:467px"></div>
<div class="pl" style="left:599px;top:487px">LAN3</div>
<div class="pl" style="left:640px;top:448px">LINK4</div>
<div class="led" style="left:649px;top:458px"></div>
<div class="port" style="left:645px;top:467px"></div>
<div class="pl" style="left:639px;top:487px">LAN4</div>
<div class="pl" style="left:721px;top:448px">VOIP1</div>
<div class="led" style="left:729px;top:458px"></div>
<div class="port" style="left:725px;top:467px"></div>
<div class="pl" style="left:717px;top:487px">VOIP1</div>
<div class="pl" style="left:762px;top:448px">VOIP2</div>
<div class="led" style="left:769px;top:458px"></div>
<div class="port" style="left:765px;top:467px"></div>
<div class="pl" style="left:757px;top:487px">VOIP2</div>
<div class="pl" style="left:798px;top:448px">USB1</div>
<div class="led" style="left:809px;top:458px"></div>
<div class="port" style="left:805px;top:467px"></div>
<div class="pl" style="left:799px;top:487px">USB1</div>
<div class="pl" style="left:838px;top:448px">USB2</div>
<div class="led" style="left:849px;top:458px"></div>
<div class="port" style="left:845px;top:467px"></div>
<div class="pl" style="left:839px;top:487px">USB2</div>
<div class="pl" style="left:667px;top:474px">WLAN</div>
<div class="led" style="left:700px;top:474px"></div>
<div class="pl" style="left:667px;top:493px">WPS</div>
<div class="led" style="left:693px;top:494px"></div>
<div class="a" style="left:1003px;top:398px;width:16px;height:158px;background-color:#f0efeb;background-image:linear-gradient(45deg,#d4d0c8 25%,transparent 25%,transparent 75%,#d4d0c8 75%),linear-gradient(45deg,#d4d0c8 25%,transparent 25%,transparent 75%,#d4d0c8 75%);background-size:2px 2px;background-position:0 0,1px 1px"></div>
<div class="a" style="left:268px;top:556px;width:735px;height:16px;background-color:#f0efeb;background-image:linear-gradient(45deg,#d4d0c8 25%,transparent 25%,transparent 75%,#d4d0c8 75%),linear-gradient(45deg,#d4d0c8 25%,transparent 25%,transparent 75%,#d4d0c8 75%);background-size:2px 2px;background-position:0 0,1px 1px"></div>
<div class="a" style="left:1003px;top:398px;width:16px;height:16px;background:#d4d0c8;border:1px solid;border-color:#fff #404040 #404040 #fff;box-shadow:inset -1px -1px 0 #808080"><svg class="a" style="left:3px;top:4px" width="8" height="5"><path d="M4 0 L8 4.5 H0Z" fill="#000"/></svg></div>
<div class="a" style="left:1003px;top:414px;width:16px;height:90px;background:#d4d0c8;border:1px solid;border-color:#fff #404040 #404040 #fff;box-shadow:inset -1px -1px 0 #808080"></div>
<div class="a" style="left:1003px;top:539px;width:16px;height:16px;background:#d4d0c8;border:1px solid;border-color:#fff #404040 #404040 #fff;box-shadow:inset -1px -1px 0 #808080"><svg class="a" style="left:3px;top:5px" width="8" height="5"><path d="M0 0 H8 L4 4.5Z" fill="#000"/></svg></div>
<div class="a" style="left:268px;top:556px;width:16px;height:16px;background:#d4d0c8;border:1px solid;border-color:#fff #404040 #404040 #fff;box-shadow:inset -1px -1px 0 #808080"><svg class="a" style="left:4px;top:3px" width="5" height="8"><path d="M4.5 0 V8 L0 4Z" fill="#000"/></svg></div>
<div class="a" style="left:284px;top:556px;width:562px;height:16px;background:#d4d0c8;border:1px solid;border-color:#fff #404040 #404040 #fff;box-shadow:inset -1px -1px 0 #808080"></div>
<div class="a" style="left:988px;top:556px;width:16px;height:16px;background:#d4d0c8;border:1px solid;border-color:#fff #404040 #404040 #fff;box-shadow:inset -1px -1px 0 #808080"><svg class="a" style="left:5px;top:3px" width="5" height="8"><path d="M0 0 V8 L4.5 4Z" fill="#000"/></svg></div>
<div class="a" style="left:1003px;top:556px;width:16px;height:16px;background:#d4d0c8"></div>
<div class="a" style="left:266px;top:573px;width:756px;height:26px;background:#d4d0c8"></div>
<div class="a" style="left:266px;top:575px;width:756px;height:24px;background:linear-gradient(#f4f3ef,#eceae4);border-top:1px solid #a0a0a0"></div>
<div class="a" style="left:268px;top:575px;width:84px;height:22px;background:#fbfbf9;border:1px solid #9a9890;border-top:0;border-radius:0 0 3px 3px"></div>
<div class="t" style="left:273px;top:580px">ONU Port Pane</div>
<div class="t" style="left:358px;top:580px;color:#333">ONU Information</div>
<div class="a" style="left:445px;top:579px;width:1px;height:15px;background:#a0a0a0"></div>
<div class="t" style="left:451px;top:580px;color:#333">Command Monitor Bar</div>

<!-- ============ OTHER INFORMATION ============ -->
<div class="hdr" style="left:0;top:604px;width:1024px;height:19px">
  <div class="t" style="left:4px;top:4px">Other Information</div>
  <svg class="a" style="left:994px;top:4px" width="9" height="11"><path d="M2.5 0.5 H6.5 V6 M2.5 0.5 V6 M0.5 6.5 H8.5 M4.5 7 V11" stroke="#e8e8e8" stroke-width="1" fill="none"/><path d="M3.5 1 V6" stroke="#e8e8e8"/></svg>
  <svg class="a" style="left:1010px;top:5px" width="9" height="9"><path d="M1 1 L8 8 M8 1 L1 8" stroke="#e8e8e8" stroke-width="1.3"/></svg>
</div>
<div class="a" style="left:0;top:623px;width:1022px;height:56px;background:#fff;border:1px solid #404040;border-left-width:2px;border-right-color:#d4d0c8;border-bottom-color:#d4d0c8"></div>
<div class="a" style="left:2px;top:624px;width:1019px;height:21px;background:linear-gradient(#dcd9d2 0,#dcd9d2 19px,#c4c1b9 22px);border-left:1px solid #fff"></div>
<div class="t" style="left:5px;top:627px">Time</div>
<div class="t" style="left:242px;top:627px">Object Name</div>
<div class="t" style="left:669px;top:627px">Alarm Describe</div>
<div class="a" style="left:237px;top:626px;width:1px;height:16px;background:#a8a59d"></div><div class="a" style="left:238px;top:626px;width:1px;height:16px;background:#fff"></div>
<div class="a" style="left:664px;top:626px;width:1px;height:16px;background:#a8a59d"></div><div class="a" style="left:665px;top:626px;width:1px;height:16px;background:#fff"></div>
<div class="t" style="left:443px;top:652px">There are no items to show.</div>
<div class="a" style="left:0;top:679px;width:1024px;height:25px;background:#d4d0c8"></div>
<div class="a" style="left:0;top:679px;width:1024px;height:3px;background:#f2f1ed"></div><div class="a" style="left:0;top:682px;width:1024px;height:1px;background:#a8a69e"></div>
<div class="a" style="left:77px;top:679px;width:100px;height:23px;background:#f8f8f6;border:1px solid #8a8a8a;border-top:0;border-radius:0 0 4px 4px"></div>
<div class="t" style="left:8px;top:686px;color:#333">Alarm Report</div>
<div class="t" style="left:82px;top:686px">Other Information</div>
<div class="t" style="left:181px;top:686px;color:#333">List of Error Tips</div>

<!-- ============ STATUS BAR ============ -->
<div class="a" style="left:0;top:704px;width:1024px;height:23px;background:#d4d0c8"></div>
<div class="a" style="left:0px;top:705px;width:22px;height:20px;border:1px solid;border-color:#c4c1b9 #f4f3ef #f4f3ef #c4c1b9"></div>
<div class="a" style="left:22px;top:705px;width:252px;height:20px;border:1px solid;border-color:#c4c1b9 #f4f3ef #f4f3ef #c4c1b9"></div>
<div class="a" style="left:276px;top:705px;width:92px;height:20px;border:1px solid;border-color:#c4c1b9 #f4f3ef #f4f3ef #c4c1b9"></div>
<div class="a" style="left:370px;top:705px;width:120px;height:20px;border:1px solid;border-color:#c4c1b9 #f4f3ef #f4f3ef #c4c1b9"></div>
<div class="a" style="left:493px;top:705px;width:121px;height:20px;border:1px solid;border-color:#c4c1b9 #f4f3ef #f4f3ef #c4c1b9"></div>
<div class="a" style="left:617px;top:705px;width:201px;height:20px;border:1px solid;border-color:#c4c1b9 #f4f3ef #f4f3ef #c4c1b9"></div>
<div class="a" style="left:820px;top:705px;width:204px;height:20px;border:1px solid;border-color:#c4c1b9 #f4f3ef #f4f3ef #c4c1b9"></div>
<div class="a" style="left:1px;top:706px;width:17px;height:18px;overflow:hidden"><div class="t" style="left:2px;top:3px">Ready</div></div>
<div class="t" style="left:24px;top:709px">Row: 1/1</div>
<div class="t" style="left:80px;top:709px">Page:1/1</div>
<div class="t" style="left:136px;top:709px">Total: 1</div>
<svg class="a" style="left:280px;top:708px" width="14" height="14"><rect x="1" y="1" width="11" height="8" fill="#333"/><rect x="3" y="3" width="7" height="4" fill="#ddd"/><path d="M2 10 H11 L12 13 H1Z" fill="#444"/></svg>
<div class="t" style="left:297px;top:709px">1(1)</div>
<svg class="a" style="left:373px;top:707px" width="16" height="16"><rect x="1" y="3" width="10" height="9" fill="#fff" stroke="#2a4a8a"/><rect x="4" y="6" width="11" height="9" fill="#dfe8f4" stroke="#2a4a8a"/><path d="M6 9 H13 M6 11 H13 M6 13 H13" stroke="#2a4a8a" stroke-width="0.7"/></svg>
<div class="t" style="left:391px;top:709px">Alarm Statistics</div>
<svg class="a" style="left:496px;top:707px" width="16" height="16"><rect x="1" y="2" width="10" height="11" fill="#fff" stroke="#2a4a8a"/><rect x="3" y="4" width="6" height="4" fill="#6a9ad0"/><path d="M9 9 L13 13 L15 11 L15 15 L11 15 L13 13" fill="#20b020" stroke="#108010" stroke-width="1"/></svg>
<div class="t" style="left:514px;top:709px">Alarm Report</div>
<svg class="a" style="left:621px;top:708px" width="16" height="14"><rect x="1" y="4" width="14" height="5" fill="#c0c0c0" stroke="#444"/><path d="M2 11 H14" stroke="#444"/><rect x="9" y="6" width="4" height="1" fill="#c03030"/></svg>
<div class="t" style="left:638px;top:709px">Server Active</div>
<div class="t" style="left:824px;top:709px;letter-spacing:0.2px">Server IP:: 172.0.31.2</div>

<!-- ============ TASKBAR ============ -->
<div class="a" style="left:0;top:726px;width:1024px;height:42px;background:#d4d0c8;border-top:1px solid #fff"></div>
<div class="a" style="left:2px;top:728px;width:59px;height:37px;background:#d4d0c8;border:1px solid;border-color:#fff #404040 #404040 #fff;box-shadow:inset -1px -1px 0 #808080"></div>
<svg class="a" style="left:6px;top:739px" width="15" height="14"><path d="M1 3 Q3 1 6 2 L5 6.5 Q3 5.5 1 7Z" fill="#e8501a"/><path d="M7 2 Q10 3 13 1.5 L12 6 Q9 7.5 6 6.5Z" fill="#6ab62a"/><path d="M1 8 Q3 6.5 5 7.5 L4 12 Q2 11 0 12.5Z" fill="#1a8ae0"/><path d="M6 7.5 Q9 8.5 12 7 L11 11.5 Q8 13 5 12Z" fill="#f8c010"/></svg>
<div class="t" style="left:21px;top:740px;font-weight:bold;font-size:11px">Iniciar</div>
<svg class="a" style="left:78px;top:728px" width="34" height="38"><defs><linearGradient id="sv" x1="0" x2="1"><stop offset="0" stop-color="#e4e8ec"/><stop offset="1" stop-color="#8e98a2"/></linearGradient><linearGradient id="bx" x1="0" y1="0" x2="0" y2="1"><stop offset="0" stop-color="#d4dce4"/><stop offset="1" stop-color="#6e7c88"/></linearGradient></defs><rect x="3.5" y="3.5" width="18" height="23" fill="url(#sv)" stroke="#7a848e"/><path d="M5 7 H12 M5 10 H12 M5 13 H12 M5 16 H12 M5 19 H12" stroke="#6a747e" stroke-width="1.2"/><path d="M8 22 L11 17 H28 L31 22 V33 H8Z" fill="url(#bx)" stroke="#5e6a76"/><path d="M15 17 Q15 13 19.5 13 Q24 13 24 17" stroke="#333" stroke-width="1.3" fill="none"/><path d="M8 24 H31" stroke="#aab4be"/><ellipse cx="14" cy="26" rx="1.2" ry="2" fill="#f4f4f4" stroke="#555" stroke-width="0.6"/><ellipse cx="24" cy="26" rx="1.2" ry="2" fill="#f4f4f4" stroke="#555" stroke-width="0.6"/></svg>
<svg class="a" style="left:130px;top:735px" width="30" height="24"><defs><linearGradient id="ps" x1="0" y1="0" x2="0.3" y2="1"><stop offset="0" stop-color="#6ec0f4"/><stop offset="0.5" stop-color="#2f8ad8"/><stop offset="1" stop-color="#1a62b8"/></linearGradient></defs><path d="M7 1 H27 Q29 1 28.5 3 L24 21 Q23.5 23 21.5 23 H2.5 Q0.5 23 1 21 L5.5 3 Q6 1 7 1Z" fill="url(#ps)" stroke="#2a6aa8" stroke-width="0.8"/><path d="M10 5 L17 11 L9 17.5" stroke="#fff" stroke-width="2.6" fill="none" stroke-linecap="round"/><path d="M15 18.5 H21" stroke="#fff" stroke-width="2.2" stroke-linecap="round"/></svg>
<div class="a" style="left:170px;top:728px;width:48px;height:38px;border:1px solid;border-color:#fff #404040 #404040 #fff;box-shadow:inset -1px -1px 0 #808080"></div>
<svg class="a" style="left:176px;top:731px" width="36" height="32"><defs><linearGradient id="fd" x1="0" y1="0" x2="0" y2="1"><stop offset="0" stop-color="#fbeec0"/><stop offset="1" stop-color="#e8c870"/></linearGradient><linearGradient id="fb" x1="0" y1="0" x2="0" y2="1"><stop offset="0" stop-color="#c8ecff"/><stop offset="1" stop-color="#4aa0e0"/></linearGradient></defs><path d="M4 4 H14 L16 6 H30 V27 H4Z" fill="#e6c878" stroke="#b89a48" stroke-width="0.8"/><rect x="6" y="3" width="3" height="2.5" fill="#3ab040"/><rect x="12" y="5" width="3" height="2.5" fill="#d04020"/><rect x="21" y="8" width="3" height="2.5" fill="#30a0b0"/><path d="M3 10 H31 V28 H3Z" fill="url(#fd)" stroke="#c0a050" stroke-width="0.8"/><path d="M7 17 H28 V29 H23 V23 H12 V29 H7Z" fill="url(#fb)" stroke="#3a80c0" stroke-width="0.8"/></svg>
<div class="a" style="left:220px;top:728px;width:47px;height:37px;background:#fff;border:2px solid;border-color:#404040 #f4f4f4 #f4f4f4 #404040"></div>
<svg class="a" style="left:226px;top:733px" width="36" height="27" viewBox="0 0 36 27"><path d="M12 24 C12 10 16 2 22 2 C27 2 30 8 31 15 L34 15 L30 25 L24 15 L27 15 C26 9 24 6.5 22 6.5 C19 6.5 16.5 12 16.5 24Z" fill="#fff" stroke="#9a9a9a" stroke-width="0.6"/><path d="M22 2 C27 2 30 8 31 15 L34 15 L30 25 L24 15 L27 15 C26 9 24 6.5 22 6.5Z" fill="#e41a14"/><path d="M2 24 C2 15 5 10 10 10 C15 10 18 15 19 24 L14 24 C13 17 12 14 10 14 C8 14 6 17 6 24Z" fill="#fff" stroke="#9a9a9a" stroke-width="0.6"/><path d="M10 10 C15 10 18 15 19 24 L14 24 C13 17 12 14 10 14Z" fill="#e41a14"/></svg>
<div class="a" style="left:270px;top:728px;width:48px;height:38px;border:1px solid;border-color:#fff #404040 #404040 #fff;box-shadow:inset -1px -1px 0 #808080"></div>
<svg class="a" style="left:276px;top:730px" width="36" height="34"><path d="M3 19 Q2 9 14 7 Q28 5 31 13 Q33 19 26 19 Q20 19 22 25 Q23 31 13 29 Q4 27 3 19Z" fill="#d4e8f6" stroke="#5a8ab8" stroke-width="1"/><circle cx="9" cy="18" r="2.6" fill="#e05a4a"/><circle cx="16" cy="12" r="2.6" fill="#5ac040"/><circle cx="24" cy="11" r="2.6" fill="#f0c030"/><circle cx="15" cy="20" r="2" fill="#a8c8e0" stroke="#6a9ac0" stroke-width="0.6"/><path d="M31 6 L19 29" stroke="#d08020" stroke-width="2.2"/><path d="M30 8 L34 1 L36 3 L32 9Z" fill="#d8b880" stroke="#a08050" stroke-width="0.6"/></svg>
<div class="a" style="left:840px;top:728px;width:181px;height:37px;border:1px solid;border-color:#808080 #fff #fff #808080"></div>
<svg class="a" style="left:845px;top:740px" width="8" height="10"><path d="M1 4.5 L4 1.5 L7 4.5 M1 8.5 L4 5.5 L7 8.5" stroke="#000" stroke-width="1.3" fill="none"/></svg>
<svg class="a" style="left:861px;top:737px" width="16" height="16"><path d="M2 1 V15" stroke="#555" stroke-width="1.5"/><path d="M3 2 Q6 0 9 2 Q12 4 14 2 V9 Q12 11 9 9 Q6 7 3 9Z" fill="#fff" stroke="#555"/></svg>
<svg class="a" style="left:886px;top:736px" width="18" height="18"><rect x="2" y="3" width="5" height="8" fill="#f8f8f8" stroke="#444"/><path d="M4.5 1 V3 M4.5 11 V15 M2 15 H10" stroke="#444"/><rect x="8" y="2" width="4" height="5" fill="#ddd" stroke="#444"/><path d="M10 9 L16 17 H4Z" fill="#f8d020" stroke="#8a6a00"/><path d="M10 12 V14.5" stroke="#000"/></svg>
<svg class="a" style="left:911px;top:737px" width="18" height="18"><path d="M1 6 H4 L9 2 V15 L4 11 H1Z" fill="#eee" stroke="#555"/><circle cx="13" cy="12" r="4" fill="#e02020"/><path d="M11 10 L15 14 M15 10 L11 14" stroke="#fff" stroke-width="1.3"/></svg>
<div class="t" style="left:954px;top:733px">09:40</div>
<div class="t" style="left:941px;top:748px">17/10/2017</div>
<svg class="a" style="left:1004px;top:740px" width="16" height="14"><rect x="0.5" y="0.5" width="15" height="11" fill="#3a7ac8" stroke="#1a3a70"/><path d="M1 8 H15" stroke="#8ac0f0"/><rect x="0" y="12" width="16" height="2" fill="#6a7a8a"/></svg>
</div></body></html>
